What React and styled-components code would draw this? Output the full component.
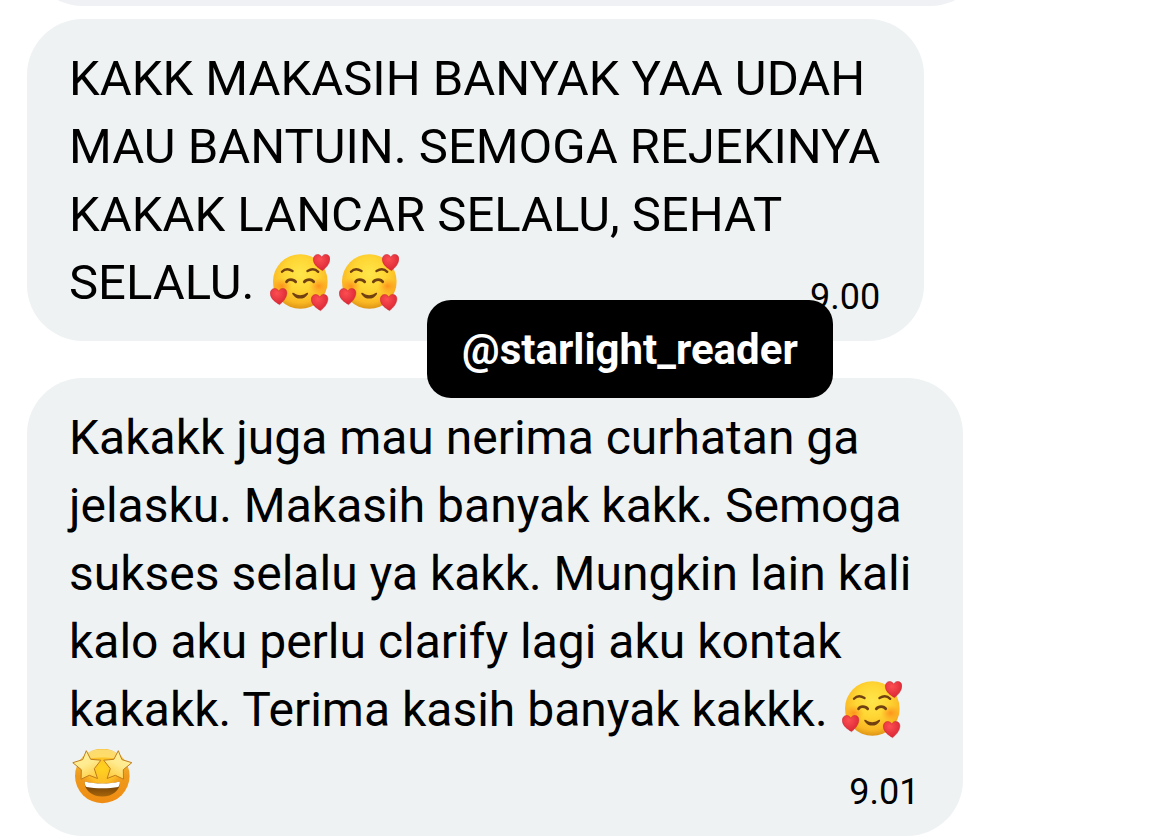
import styled, { createGlobalStyle } from "styled-components";

const GlobalStyle = createGlobalStyle`
  body {
    margin: 0;
    background: #fff;
    color: #000;
    font-family: Roboto, "Liberation Sans", sans-serif;
  }
`;

const Chat = styled.main`
  display: flex;
  flex-direction: column;
  padding-left: 27px;
  overflow: hidden;
`;

// Older message, scrolled almost out of view
const ScrolledOut = styled.div`
  display: flex;
  align-items: flex-end;
  height: 6px;
  margin-bottom: 13px;
  overflow: hidden;
`;

const OldBubble = styled.div`
  flex: none;
  width: 84%;
  height: 120px;
  background: #eff1f4;
  border-radius: 56px;
`;

const Message = styled.div`
  position: relative;
  margin-bottom: ${(props) => props.$gap || 0}px;
`;

const Bubble = styled.article`
  display: grid;
  box-sizing: border-box;
  width: ${(props) => props.$width || "fit-content"};
  padding: 26px 44px 24px 42px;
  background: #eef2f3;
  border-radius: 56px;
`;

const Text = styled.p`
  grid-area: 1 / 1;
  margin: 0;
  font-size: ${(props) => props.$size}px;
  line-height: 68px;
  white-space: nowrap;
`;

const Line = styled.span`
  display: block;
`;

const Time = styled.time`
  grid-area: 1 / 1;
  place-self: end;
  font-size: 36px;
  line-height: 40px;
`;

const Handle = styled.div`
  position: absolute;
  z-index: 1;
  left: 400px;
  bottom: -57px;
  padding: 2px 35px 0;
  background: #000;
  border-radius: 24px;
  color: #fff;
  font-size: 42px;
  font-weight: 700;
  line-height: 96px;
`;

const Emoji = styled.svg`
  width: 60px;
  height: 58px;
  margin: 0 6px 0 3px;
  vertical-align: -13px;
`;

function Heart({ x, y }) {
  return (
    <path
      transform={`translate(${x} ${y})`}
      d="M9.6 16.6C5.2 14 .9 10.8.4 6.2 0 2.9 1.9.6 4.4.5c2-.1 3.500 1 4.200 2.700C9.600 1.300 11.300.2 13.300.4c2.500.3 4 2.700 3.500 5.700-.6 4.200-3.800 7.800-7.200 10.500z"
      fill="url(#heart)"
      stroke="#c4202c"
      strokeWidth=".5"
    />
  );
}

function HeartsFace() {
  return (
    <Emoji viewBox="0 0 60 58" role="img" aria-label="Smiling face with hearts">
      <defs>
        <radialGradient id="face" cx=".5" cy=".36" r=".66">
          <stop offset="0" stopColor="#ffe64a" />
          <stop offset=".45" stopColor="#ffd634" />
          <stop offset=".8" stopColor="#fab824" />
          <stop offset="1" stopColor="#d98e14" />
        </radialGradient>
        <radialGradient id="blush">
          <stop offset="0" stopColor="#ff7010" stopOpacity=".6" />
          <stop offset="1" stopColor="#ff8a1c" stopOpacity="0" />
        </radialGradient>
        <radialGradient id="heart" cx=".4" cy=".3" r=".7">
          <stop offset="0" stopColor="#fb4e52" />
          <stop offset="1" stopColor="#dc2735" />
        </radialGradient>
      </defs>
      <circle cx="30.3" cy="27.5" r="27.3" fill="url(#face)" />
      <ellipse cx="12" cy="32" rx="10" ry="8" fill="url(#blush)" />
      <ellipse cx="48.5" cy="32" rx="10" ry="8" fill="url(#blush)" />
      <g fill="none" stroke="#704010" strokeLinecap="round" strokeLinejoin="round">
        <path d="M12 17.800C14.500 15 18.500 14.500 22.500 17M37.500 17C41.500 14.500 45.500 15 48.200 17.800" strokeWidth="2.400" />
        <path d="M16.500 27.800C18 24.800 23.500 24.800 25.700 27.800M34.300 27.800C36.500 24.800 42 24.800 43.700 27.800" strokeWidth="2.800" />
      </g>
      <path
        d="M22.700 38.700c-.7.3-.5 1 0 1.700 3.500 5.600 11.400 5.600 15 0 .5-.7.6-1.400 0-1.700-.6-.3-1.300.4-2 .9-3.300 2.100-7.700 2.100-11 0-.7-.5-1.400-1.200-2-.9z"
        fill="#704010"
      />
      <Heart x={43} y={0} />
      <Heart x={0} y={34} />
      <Heart x={41} y={40} />
    </Emoji>
  );
}

function StarFace() {
  const star =
    "M14.300 3.700 18.700 12.300 28.900 13.200 22.300 21.700 25.500 31.500 17.300 28.300 9.100 32.200 9.300 22.700.8 15.700 10.700 12.600Z";
  return (
    <Emoji viewBox="0 2 60 58" role="img" aria-label="Star-struck">
      <defs>
        <linearGradient id="starFace" x1="0" y1="0" x2="0" y2="1">
          <stop offset="0" stopColor="#f7c843" />
          <stop offset=".5" stopColor="#ee9a1c" />
          <stop offset="1" stopColor="#ef8c12" />
        </linearGradient>
        <radialGradient id="starGlow" cx=".5" cy=".4" r=".5">
          <stop offset="0" stopColor="#ffd31f" />
          <stop offset=".6" stopColor="#fcbc26" />
          <stop offset="1" stopColor="#f6a51f" stopOpacity="0" />
        </radialGradient>
        <linearGradient id="star" x1=".2" y1="0" x2=".7" y2="1">
          <stop offset="0" stopColor="#fff3a0" />
          <stop offset=".5" stopColor="#ffea8e" />
          <stop offset="1" stopColor="#ffcb38" />
        </linearGradient>
        <linearGradient id="mouth" x1="0" y1="0" x2="0" y2="1">
          <stop offset="0" stopColor="#5f3304" />
          <stop offset="1" stopColor="#a8660a" />
        </linearGradient>
      </defs>
      <circle cx="30.3" cy="28.9" r="27.3" fill="url(#starFace)" />
      <circle cx="30.3" cy="26" r="24" fill="url(#starGlow)" />
      <path d="M9 13.500C14 3.500 24 2.500 30.300 2.500S46.600 3.500 51.600 13.500C44 9.500 16.600 9.500 9 13.500z" fill="#fff29a" opacity=".6" />
      <path d="M12.700 34.500c11 3 24.200 3 35.200 0 .6 8.700-7.300 15-17.600 15s-18.200-6.300-17.600-15z" fill="url(#mouth)" />
      <path d="M12.800 34.400c11 2.800 24 2.800 35 0 .2 2.100-.3 4.200-1.600 5.500-9.400 1.700-22.400 1.700-31.800 0-1.300-1.300-1.800-3.400-1.600-5.500z" fill="#fff" />
      <g fill="url(#star)" stroke="#c07d1c" strokeWidth="1" strokeLinejoin="round">
        <path d={star} />
        <path d={star} transform="matrix(-1 0 0 1 60.600 0)" />
      </g>
    </Emoji>
  );
}

export default function App() {
  return (
    <>
      <GlobalStyle />
      <Chat>
        <ScrolledOut>
          <OldBubble />
        </ScrolledOut>
        <Message $gap={37}>
          <Bubble>
            <Text $size={49}>
              <Line>KAKK MAKASIH BANYAK YAA UDAH</Line>
              <Line>MAU BANTUIN. SEMOGA REJEKINYA</Line>
              <Line>KAKAK LANCAR SELALU, SEHAT</Line>
              <Line>
                SELALU. <HeartsFace />
                <HeartsFace />
              </Line>
            </Text>
            <Time dateTime="09:00">9.00</Time>
          </Bubble>
          <Handle>@starlight_reader</Handle>
        </Message>
        <Message>
          <Bubble $width="82%">
            <Text $size={48}>
              <Line>Kakakk juga mau nerima curhatan ga</Line>
              <Line>jelasku. Makasih banyak kakk. Semoga</Line>
              <Line>sukses selalu ya kakk. Mungkin lain kali</Line>
              <Line>kalo aku perlu clarify lagi aku kontak</Line>
              <Line>
                kakakk. Terima kasih banyak kakkk. <HeartsFace />
              </Line>
              <Line>
                <StarFace />
              </Line>
            </Text>
            <Time dateTime="09:01">9.01</Time>
          </Bubble>
        </Message>
      </Chat>
    </>
  );
}
